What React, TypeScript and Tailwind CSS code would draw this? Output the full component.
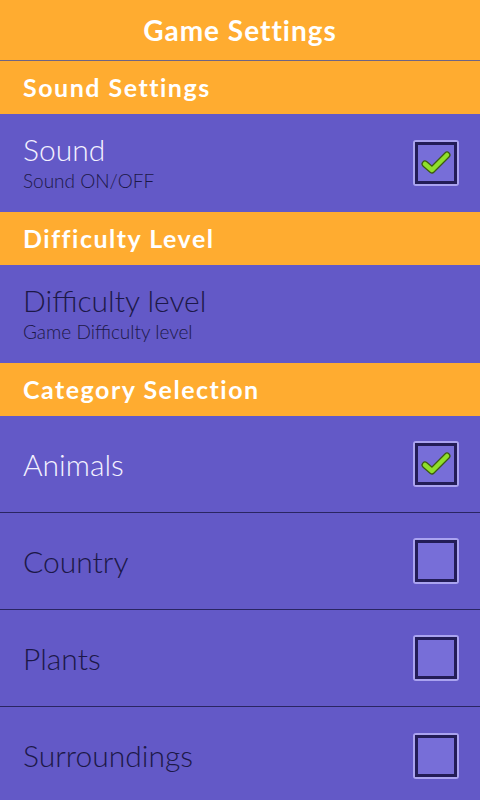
import React from "react";

const Check = () => (
  <svg width="30" height="26" viewBox="0 0 30 26" className="block">
    <path d="M4 14 L11 20 L26 5" fill="none" stroke="#3c5a10" strokeWidth="7" strokeLinecap="round" strokeLinejoin="round" />
    <path d="M4 14 L11 20 L26 5" fill="none" stroke="#8fe02a" strokeWidth="4.5" strokeLinecap="round" strokeLinejoin="round" />
  </svg>
);

const Box = ({ checked }: { checked?: boolean }) => (
  <div className="w-[46px] h-[46px] rounded-[3px] border-2 border-[#aaa3f0] flex">
    <div className="flex-1 border-[3px] border-[#231d57] bg-[#776ed8] flex items-center justify-center">
      {checked && <Check />}
    </div>
  </div>
);

const Band = ({ title }: { title: string }) => (
  <div className="h-[53px] bg-[#ffac30] flex items-center pl-[23px]">
    <span className="text-white font-bold text-[25px] tracking-[1.5px]">{title}</span>
  </div>
);

const Item = ({ label, checked, light, last }: { label: string; checked?: boolean; light?: boolean; last?: boolean }) => (
  <div className={`h-[97px] bg-[#6359c7] flex items-center justify-between pl-[23px] pr-[21px] ${last ? "" : "border-b border-[#2a2562]"}`}>
    <span className={`text-[30px] font-light ${light ? "text-[#f4f2ff]" : "text-[#1c1848]"}`}>{label}</span>
    <Box checked={checked} />
  </div>
);

export default function App() {
  return (
    <div className="w-[480px] h-[800px] overflow-hidden bg-[#6359c7]" style={{ fontFamily: "Lato, sans-serif" }}>
      <div className="h-[60px] bg-[#ffac30] flex items-center justify-center border-b border-[#6e6585] box-content">
        <span className="text-white font-bold text-[28px] tracking-[1px]">Game Settings</span>
      </div>
      <Band title="Sound Settings" />
      <div className="h-[98px] bg-[#6359c7] flex items-center justify-between pl-[23px] pr-[21px]">
        <div className="flex flex-col">
          <span className="text-[30px] font-light text-[#f4f2ff] leading-[32px] mt-[1px]">Sound</span>
          <span className="text-[19px] font-light text-[#1c1848] leading-[26px] mt-[3px]">Sound ON/OFF</span>
        </div>
        <Box checked />
      </div>
      <Band title="Difficulty Level" />
      <div className="h-[98px] bg-[#6359c7] flex items-center pl-[23px]">
        <div className="flex flex-col">
          <span className="text-[30px] font-light text-[#1c1848] leading-[32px] mt-[1px]">Difficulty level</span>
          <span className="text-[19px] font-light text-[#1c1848] leading-[26px] mt-[3px]">Game Difficulty level</span>
        </div>
      </div>
      <Band title="Category Selection" />
      <Item label="Animals" checked light />
      <Item label="Country" />
      <Item label="Plants" />
      <Item label="Surroundings" last />
    </div>
  );
}
